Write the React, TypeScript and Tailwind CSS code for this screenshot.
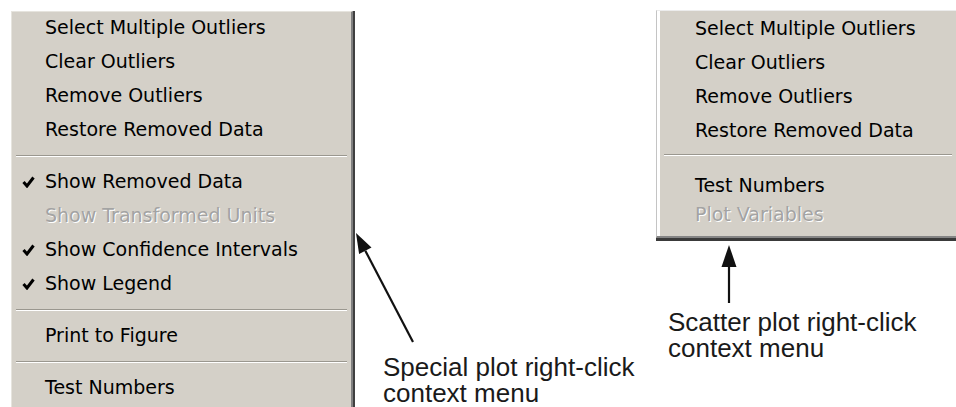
const menuFont = { fontFamily: '"DejaVu Sans", Tahoma, Verdana, sans-serif' }
const labelFont = { fontFamily: '"Liberation Sans", Arial, Helvetica, sans-serif' }

type Item = { label: string; checked?: boolean; disabled?: boolean; h?: string }

function Check() {
  return (
    <svg width="13" height="12" viewBox="0 0 13 12" className="absolute left-[10px] top-[10px]">
      <path d="M1.5 6 L5 10 L11.5 1.5" fill="none" stroke="#000" strokeWidth="3" strokeLinejoin="miter" />
    </svg>
  )
}

function Row({ item, pad }: { item: Item; pad: string }) {
  return (
    <div className={`relative ${item.h ?? 'h-[34px]'} leading-[30px] text-[19px] whitespace-nowrap ${pad}`}>
      {item.checked && <Check />}
      <span
        className={
          item.disabled
            ? 'text-[#a3a3a3] [text-shadow:1px_1px_0_#ffffff]'
            : 'text-black'
        }
      >
        {item.label}
      </span>
    </div>
  )
}

function Separator({ className }: { className: string }) {
  return (
    <div className={`mx-[4px] border-t border-t-[#9a978f] border-b border-b-white ${className}`} />
  )
}

function LeftMenu() {
  const a: Item[] = [
    { label: 'Select Multiple Outliers' },
    { label: 'Clear Outliers' },
    { label: 'Remove Outliers' },
    { label: 'Restore Removed Data' },
  ]
  const b: Item[] = [
    { label: 'Show Removed Data', checked: true },
    { label: 'Show Transformed Units', disabled: true },
    { label: 'Show Confidence Intervals', checked: true },
    { label: 'Show Legend', checked: true },
  ]
  return (
    <div className="ml-[11px] mt-[11px] w-[344px] h-[420px] shrink-0 border-r-2 border-r-[#404040]" style={menuFont}>
      <div className="h-full bg-[#d4d0c8] border-l border-t border-[#e6e4de] border-r-2 border-r-[#808080]">
        {a.map((i) => <Row key={i.label} item={i} pad="pl-[33px]" />)}
        <Separator className="mt-[7px] mb-[9px]" />
        {b.map((i) => <Row key={i.label} item={i} pad="pl-[33px]" />)}
        <Separator className="mt-[7px] mb-[9px]" />
        <Row item={{ label: 'Print to Figure' }} pad="pl-[33px]" />
        <Separator className="mt-[7px] mb-[9px]" />
        <Row item={{ label: 'Test Numbers' }} pad="pl-[33px]" />
      </div>
    </div>
  )
}

function RightMenu() {
  const a: Item[] = [
    { label: 'Select Multiple Outliers' },
    { label: 'Clear Outliers' },
    { label: 'Remove Outliers' },
    { label: 'Restore Removed Data' },
  ]
  return (
    <div className="h-[231px] border-b-[3px] border-b-[#3a3a3a]" style={menuFont}>
      <div className="h-full bg-[#d4d0c8] border-l border-l-[#c4c4c4] border-t border-t-[#ececec] border-b-2 border-b-[#858585] flex">
        <div className="w-[3px] bg-white" />
        <div className="flex-1 pt-[2px]">
          {a.map((i) => <Row key={i.label} item={i} pad="pl-[35px]" />)}
          <Separator className="mt-[5px] mb-[14px] mx-0" />
          <Row item={{ label: 'Test Numbers', h: 'h-[29px]' }} pad="pl-[35px]" />
          <Row item={{ label: 'Plot Variables', disabled: true }} pad="pl-[35px]" />
        </div>
      </div>
    </div>
  )
}

function Label({ lines, className }: { lines: string[]; className: string }) {
  return (
    <div className={`text-[26px] leading-[26px] text-[#1a1a1a] whitespace-nowrap ${className}`} style={labelFont}>
      {lines.map((l) => (
        <div key={l}>{l}</div>
      ))}
    </div>
  )
}

export default function App() {
  return (
    <div className="flex w-[956px] h-[407px] overflow-hidden bg-white">
      <LeftMenu />

      <div className="w-[301px] shrink-0 flex flex-col">
        <svg width="70" height="116" viewBox="0 0 70 116" className="mt-[228px] shrink-0">
          <line x1="10.3" y1="22.7" x2="58" y2="114" stroke="#111" strokeWidth="2.2" />
          <polygon points="1,5 4.1,25.9 16.5,19.5" fill="#111" />
        </svg>
        <Label lines={['Special plot right-click', 'context menu']} className="mt-[10px] pl-[28px]" />
      </div>

      <div className="w-[300px] shrink-0 flex flex-col mt-[10px]">
        <RightMenu />
        <svg width="150" height="63" viewBox="0 0 150 63" className="shrink-0">
          <polygon points="73,4 65.5,26 80.5,26" fill="#111" />
          <line x1="73" y1="24" x2="73" y2="62" stroke="#111" strokeWidth="2.2" />
        </svg>
        <Label lines={['Scatter plot right-click', 'context menu']} className="mt-[5px] pl-[12px]" />
      </div>
    </div>
  )
}
